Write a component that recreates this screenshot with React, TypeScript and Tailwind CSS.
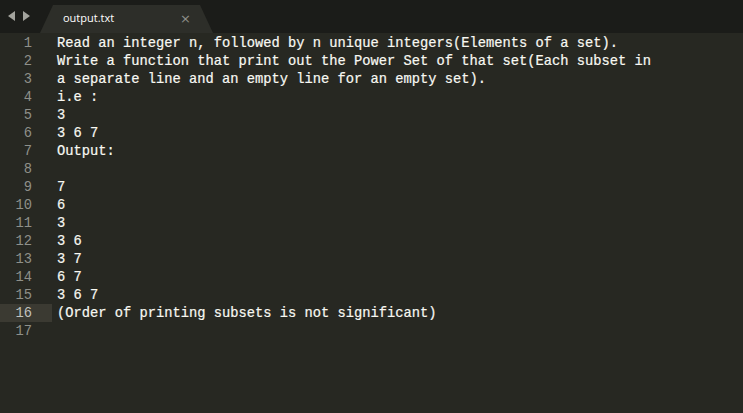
import React from 'react';

const lines = [
  'Read an integer n, followed by n unique integers(Elements of a set).',
  'Write a function that print out the Power Set of that set(Each subset in',
  'a separate line and an empty line for an empty set).',
  'i.e :',
  '3',
  '3 6 7',
  'Output:',
  '',
  '7',
  '6',
  '3',
  '3 6',
  '3 7',
  '6 7',
  '3 6 7',
  '(Order of printing subsets is not significant)',
  '',
];

export default function App() {
  return (
    <div className="w-[743px] h-[413px] bg-[#272822] overflow-hidden flex flex-col">
      <div className="h-[33px] bg-[#1b1c19] flex items-end shrink-0">
        <div className="w-[40px] h-full flex items-center gap-[6px] pl-[8px] pb-[1px]">
          <svg width="8" height="10" viewBox="0 0 8 10">
            <path d="M7 0 L0 5 L7 10 Z" fill="#a3a39d" />
          </svg>
          <svg width="8" height="10" viewBox="0 0 8 10">
            <path d="M1 0 L8 5 L1 10 Z" fill="#a3a39d" />
          </svg>
        </div>
        <div className="relative h-[28px] w-[173px] bg-[#2d2e29] [clip-path:polygon(13px_0,160px_0,173px_100%,0_100%)] flex items-center pl-[23px] pr-[22px]">
          <span className="text-[11px] text-white flex-1 pb-[2px]" style={{ fontFamily: '"Open Sans", "Liberation Sans", sans-serif' }}>
            output.txt
          </span>
          <span className="text-[13px] text-[#8f8f8a] leading-none pb-[2px]" style={{ fontFamily: '"DejaVu Sans", sans-serif' }}>
            ×
          </span>
        </div>
      </div>
      <div className="flex-1 pt-[1px]" style={{ fontFamily: '"Liberation Mono", "DejaVu Sans Mono", monospace' }}>
        {lines.map((t, i) => (
          <div key={i} className="flex h-[18px] leading-[20px] text-[13.75px]">
            <div className={`w-[52px] shrink-0 pr-[20px] text-right ${i === 15 ? 'bg-[#3b3a32] text-[#c2c2bf]' : 'text-[#8f908a]'}`}>
              {i + 1}
            </div>
            <div className="pl-[5px] text-[#f8f8f2] whitespace-pre [-webkit-text-stroke:0.2px_#f8f8f2]">{t}</div>
          </div>
        ))}
      </div>
    </div>
  );
}
